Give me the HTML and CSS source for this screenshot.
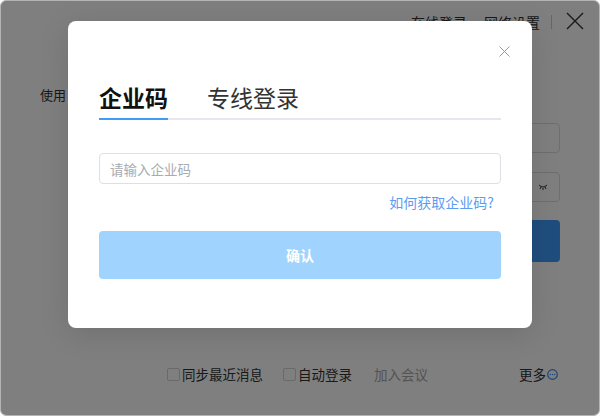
FILE: index.html
```html
<!DOCTYPE html>
<html lang="zh-CN">
<head>
    <meta charset="UTF-8">
    <title>登录</title>
    <link rel="stylesheet" href="styles.css">
</head>
<body>
<section class="app">
    <div class="topbar">
        <a class="top-link">在线登录</a>
        <a class="top-link">网络设置</a>
        <span class="sep"></span>
        <a class="win-close">
            <svg width="18" height="18" viewBox="0 0 18 18"><path d="M1 1L17 17M17 1L1 17" stroke="#333" stroke-width="1.4" fill="none"/></svg>
        </a>
    </div>
    <div class="main">
        <div class="main-title">使用</div>
        <div class="field"></div>
        <div class="field">
            <svg class="eye" width="10" height="6" viewBox="0 0 10 6"><path d="M1 1Q5 5 9 1M3 3L2 5M5 4V6M7 3L8 5" stroke="#333" stroke-width="1" fill="none"/></svg>
        </div>
        <div class="login-btn"></div>
    </div>
    <div class="footer">
        <label class="check"><i></i>同步最近消息</label>
        <label class="check"><i></i>自动登录</label>
        <a class="join">加入会议</a>
        <a class="more">更多<svg width="11" height="11" viewBox="0 0 11 11"><circle cx="5.5" cy="5.5" r="4.8" stroke="#3e8bf0" stroke-width="1.2" fill="none"/><circle cx="3.3" cy="5.5" r=".7" fill="#3e8bf0"/><circle cx="5.5" cy="5.5" r=".7" fill="#3e8bf0"/><circle cx="7.7" cy="5.5" r=".7" fill="#3e8bf0"/></svg></a>
    </div>

    <div class="mask">
        <div class="dialog">
            <a class="dialog-close">
                <svg width="11" height="11" viewBox="0 0 11 11"><path d="M.5 .5L10.5 10.5M10.5 .5L.5 10.5" stroke="#999" stroke-width="1" fill="none"/></svg>
            </a>
            <div class="tabs">
                <a class="tab active">企业码</a>
                <a class="tab">专线登录</a>
            </div>
            <input class="code-input" type="text" placeholder="请输入企业码">
            <div class="help"><a>如何获取企业码?</a></div>
            <button class="confirm">确认</button>
        </div>
    </div>
</section>
</body>
</html>
```

FILE: styles.css
```css
html, body{ margin: 0; background: #fff;}
body *{ font-family: "Noto Sans CJK SC", "Noto Sans", sans-serif; box-sizing: border-box;}
a{ text-decoration: none; cursor: pointer;}

.app{ position: relative; width: 600px; height: 416px; background: #fff; border: 1px solid #b4b4b4; border-radius: 6px; overflow: hidden;}

.topbar{ height: 41px; display: flex; justify-content: flex-end; align-items: center; padding-right: 15px;}
.top-link{ font-size: 14px; color: #333; margin-left: 17px; line-height: 20px;}
.sep{ width: 1px; height: 14px; background: #ccc; margin: 0 14px 0 11px;}
.win-close{ display: flex; width: 18px; height: 18px; margin-top: -1px;}

.main{ padding: 0 39px;}
.main-title{ margin-top: 44px; font-size: 13px; line-height: 18px; color: #333;}
.field{ position: relative; height: 30px; margin: 19px 0 0 90px; border: 1px solid #ddd; border-radius: 4px; display: flex; align-items: center; justify-content: flex-end; padding-right: 11px;}
.login-btn{ height: 42px; margin: 18px 0 0 90px; background: #3e9cfc; border-radius: 4px;}

.footer{ display: flex; align-items: center; margin-top: 102px; padding: 0 41px 0 166px; font-size: 13.5px; line-height: 20px; color: #333;}
.check{ display: flex; align-items: center; margin-right: 20px;}
.check i{ width: 13px; height: 13px; border: 1px solid #d2d2d2; border-radius: 2px; margin-right: 2px; background: #fff;}
.join{ color: #a6a6a6; margin-left: 2px;}
.more{ margin-left: auto; color: #333; display: flex; align-items: center;}
.more svg{ margin-left: 1px;}

.mask{ position: absolute; left: 0; top: 0; right: 0; bottom: 0; background: rgba(0,0,0,.5); display: flex; justify-content: center; align-items: flex-start; padding-top: 20px;}
.dialog{ position: relative; width: 464px; background: #fff; border-radius: 8px; padding: 60px 31px 49px; box-shadow: 0 6px 30px rgba(0,0,0,.12);}
.dialog-close{ position: absolute; right: 22px; top: 25px; display: flex;}

.tabs{ display: flex; border-bottom: 2px solid #e5e7ec;}
.tab{ font-size: 23px; line-height: 32px; padding-bottom: 5px; color: #333; margin-right: 39px; margin-bottom: -2px; border-bottom: 2px solid transparent;}
.tab.active{ color: #111; font-weight: bold; border-bottom-color: #409cf5;}

.code-input{ display: block; width: 100%; height: 31px; margin-top: 33px; border: 1px solid #dcdfe6; border-radius: 4px; padding: 0 10px; font-size: 13.5px; color: #333; outline: none;}
.code-input::placeholder{ color: #a8abb2;}
.help{ text-align: right; margin-top: 7px; padding-right: 7px; line-height: 20px;}
.help a{ font-size: 14px; color: #5d9df0;}
.confirm{ display: block; width: 100%; height: 48px; margin-top: 19px; border: 0; border-radius: 4px; background: #a0d3fd; color: #fff; font-size: 14px; font-weight: bold; -webkit-appearance: none;}
```
